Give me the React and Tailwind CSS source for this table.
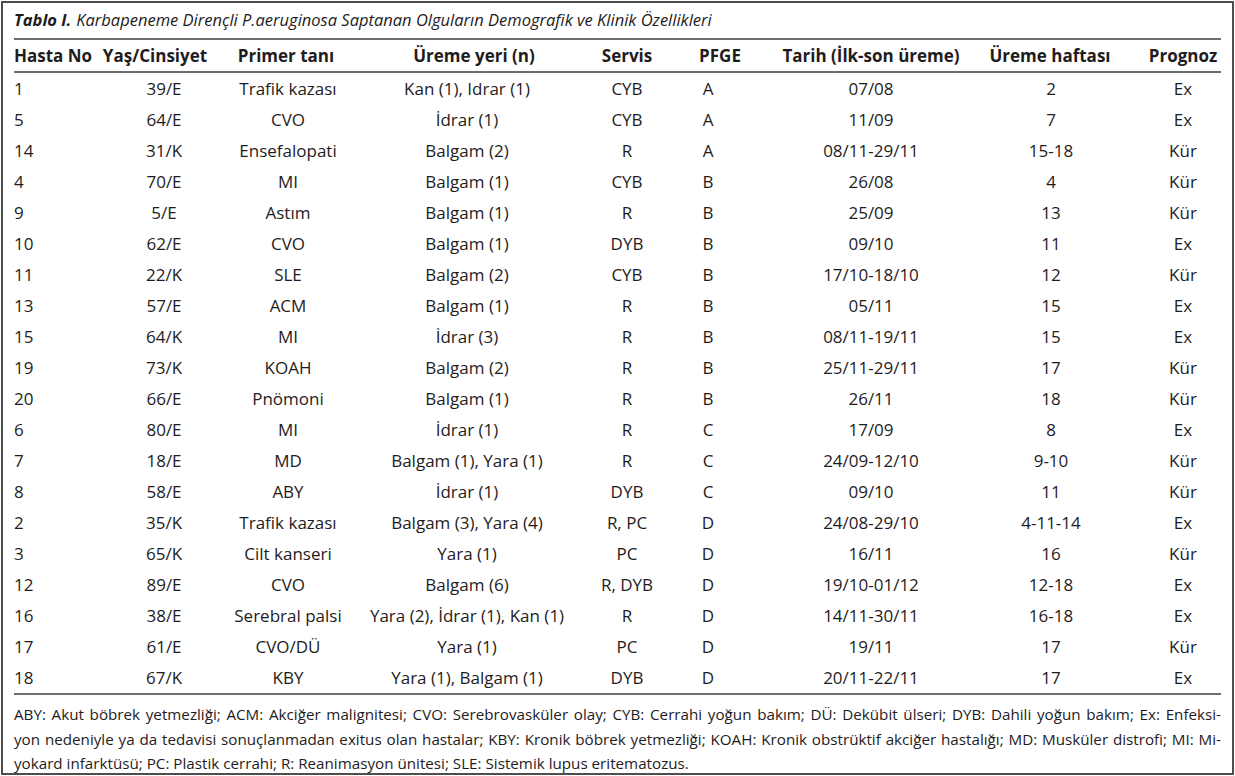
import React from 'react';

const rows = [
  ['1', '39/E', 'Trafik kazası', 'Kan (1), Idrar (1)', 'CYB', 'A', '07/08', '2', 'Ex'],
  ['5', '64/E', 'CVO', 'İdrar (1)', 'CYB', 'A', '11/09', '7', 'Ex'],
  ['14', '31/K', 'Ensefalopati', 'Balgam (2)', 'R', 'A', '08/11-29/11', '15-18', 'Kür'],
  ['4', '70/E', 'MI', 'Balgam (1)', 'CYB', 'B', '26/08', '4', 'Kür'],
  ['9', '5/E', 'Astım', 'Balgam (1)', 'R', 'B', '25/09', '13', 'Kür'],
  ['10', '62/E', 'CVO', 'Balgam (1)', 'DYB', 'B', '09/10', '11', 'Ex'],
  ['11', '22/K', 'SLE', 'Balgam (2)', 'CYB', 'B', '17/10-18/10', '12', 'Kür'],
  ['13', '57/E', 'ACM', 'Balgam (1)', 'R', 'B', '05/11', '15', 'Ex'],
  ['15', '64/K', 'MI', 'İdrar (3)', 'R', 'B', '08/11-19/11', '15', 'Ex'],
  ['19', '73/K', 'KOAH', 'Balgam (2)', 'R', 'B', '25/11-29/11', '17', 'Kür'],
  ['20', '66/E', 'Pnömoni', 'Balgam (1)', 'R', 'B', '26/11', '18', 'Kür'],
  ['6', '80/E', 'MI', 'İdrar (1)', 'R', 'C', '17/09', '8', 'Ex'],
  ['7', '18/E', 'MD', 'Balgam (1), Yara (1)', 'R', 'C', '24/09-12/10', '9-10', 'Kür'],
  ['8', '58/E', 'ABY', 'İdrar (1)', 'DYB', 'C', '09/10', '11', 'Kür'],
  ['2', '35/K', 'Trafik kazası', 'Balgam (3), Yara (4)', 'R, PC', 'D', '24/08-29/10', '4-11-14', 'Ex'],
  ['3', '65/K', 'Cilt kanseri', 'Yara (1)', 'PC', 'D', '16/11', '16', 'Kür'],
  ['12', '89/E', 'CVO', 'Balgam (6)', 'R, DYB', 'D', '19/10-01/12', '12-18', 'Ex'],
  ['16', '38/E', 'Serebral palsi', 'Yara (2), İdrar (1), Kan (1)', 'R', 'D', '14/11-30/11', '16-18', 'Ex'],
  ['17', '61/E', 'CVO/DÜ', 'Yara (1)', 'PC', 'D', '19/11', '17', 'Kür'],
  ['18', '67/K', 'KBY', 'Yara (1), Balgam (1)', 'DYB', 'D', '20/11-22/11', '17', 'Ex'],
];

const headers = ['Hasta No', 'Yaş/Cinsiyet', 'Primer tanı', 'Üreme yeri (n)', 'Servis', 'PFGE', 'Tarih (İlk-son üreme)', 'Üreme haftası', 'Prognoz'];

// per-column cell classes (header / body) so the text sits where the print puts it
const headCls = [
  'justify-start',
  'justify-center',
  'justify-center',
  'justify-center',
  'justify-center',
  'justify-center',
  'justify-center',
  'justify-center pr-[16px]',
  'justify-center',
];
const bodyCls = [
  'justify-start',
  'justify-center pl-[18px]',
  'justify-center pl-[4px]',
  'justify-center pr-[14px]',
  'justify-center',
  'justify-center pr-[24px]',
  'justify-center',
  'justify-center pr-[14px]',
  'justify-center',
];

const grid = 'grid grid-cols-[86px_110px_152px_224px_82px_104px_198px_176px_74px]';

export default function App() {
  return (
    <div className="w-[1235px] h-[776px] bg-white p-[1px] text-[#1f1c1d]" style={{ fontFamily: '"Open Sans", "Noto Sans", sans-serif' }}>
      <div className="h-full border-2 border-[#4d4d4d] px-[11px]">
        <div className="h-[37px] border-b-2 border-[#6d6d6d] flex items-center text-[16.5px] italic">
          <span className="font-bold mr-[5px]">Tablo I.</span>
          <span>Karbapeneme Dirençli P.aeruginosa Saptanan Olguların Demografik ve Klinik Özellikleri</span>
        </div>
        <div className={`${grid} h-[33px] border-b-2 border-[#6d6d6d] text-[17px] font-bold`}>
          {headers.map((h, i) => (
            <div key={i} className={`flex items-center whitespace-nowrap ${headCls[i]}`}>{h}</div>
          ))}
        </div>
        <div>
          {rows.map((r, ri) => (
            <div key={ri} className={`${grid} h-[31px] text-[17px]`}>
              {r.map((c, i) => (
                <div key={i} className={`flex items-center whitespace-nowrap ${bodyCls[i]}`}>{c}</div>
              ))}
            </div>
          ))}
        </div>
        <div className="border-t-2 border-[#6d6d6d] pt-[7px] text-[15.2px] leading-[24.5px]">
          <p className="text-justify [text-align-last:justify]">ABY: Akut böbrek yetmezliği; ACM: Akciğer malignitesi; CVO: Serebrovasküler olay; CYB: Cerrahi yoğun bakım; DÜ: Dekübit ülseri; DYB: Dahili yoğun bakım; Ex: Enfeksi-</p>
          <p className="text-justify [text-align-last:justify]">yon nedeniyle ya da tedavisi sonuçlanmadan exitus olan hastalar; KBY: Kronik böbrek yetmezliği; KOAH: Kronik obstrüktif akciğer hastalığı; MD: Musküler distrofi; MI: Mi-</p>
          <p>yokard infarktüsü; PC: Plastik cerrahi; R: Reanimasyon ünitesi; SLE: Sistemik lupus eritematozus.</p>
        </div>
      </div>
    </div>
  );
}
